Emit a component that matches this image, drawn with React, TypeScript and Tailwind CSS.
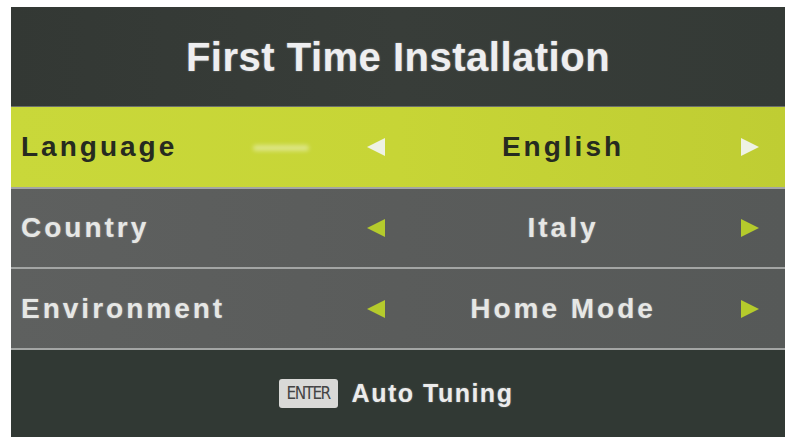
import React from 'react';

type Row = {
  label: string;
  value: string;
  active?: boolean;
};

const rows: Row[] = [
  { label: 'Language', value: 'English', active: true },
  { label: 'Country', value: 'Italy' },
  { label: 'Environment', value: 'Home Mode' },
];

function Arrow({ dir, color }: { dir: 'left' | 'right'; color: string }) {
  const points = dir === 'left' ? '0,8 16,0 16,16' : '0,0 16,8 0,16';
  return (
    <svg width="18" height="18" viewBox="0 0 16 16" className="shrink-0">
      <polygon points={points} fill={color} />
    </svg>
  );
}

function MenuRow({ row, heightClass }: { row: Row; heightClass: string }) {
  const text = row.active
    ? 'text-[#262b20]'
    : 'text-[#e6e7e5] [text-shadow:0_0_2px_rgba(255,255,255,0.35)]';
  const arrow = row.active ? '#eef2e4' : '#b5cb2c';
  return (
    <div
      className={`relative flex items-center pr-[26px] ${heightClass} ${
        row.active
          ? 'bg-gradient-to-r from-[#c9d83a] via-[#c7d536] to-[#bfcd33]'
          : 'bg-gradient-to-r from-[#5e605f] via-[#5a5c5b] to-[#565958]'
      }`}
    >
      <div className={`w-[356px] pl-[10px] text-[28px] font-bold tracking-[3px] ${text}`}>
        {row.label}
      </div>
      {row.active && (
        // faint reflection streak on the panel
        <div className="absolute left-[242px] top-[38px] h-[6px] w-[56px] rounded-full bg-white/40 blur-[2px]" />
      )}
      <Arrow dir="left" color={arrow} />
      <div className={`flex-1 text-center text-[28px] font-bold tracking-[3px] ${text}`}>
        {row.value}
      </div>
      <Arrow dir="right" color={arrow} />
    </div>
  );
}

export default function App() {
  return (
    <div
      className="w-[793px] h-[447px] bg-white pt-[7px] pl-[11px]"
      style={{ fontFamily: '"Liberation Sans", Arial, sans-serif' }}
    >
      <div className="flex h-[430px] w-[774px] flex-col bg-[#343a36]">
        {/* Title */}
        <div className="flex h-[100px] items-center justify-center bg-gradient-to-r from-[#333834] via-[#383d39] to-[#343a36] border-b border-[#6c706b]">
          <h1 className="text-[40px] font-bold tracking-[0.5px] text-[#eeeef0] [text-shadow:0_0_2px_rgba(255,255,255,0.4)]">
            First Time Installation
          </h1>
        </div>

        <MenuRow row={rows[0]} heightClass="h-[80px]" />
        <div className="h-[2px] bg-[#a3a5a4]" />
        <MenuRow row={rows[1]} heightClass="h-[78px]" />
        <div className="h-[2px] bg-[#a3a5a4]" />
        <MenuRow row={rows[2]} heightClass="h-[79px]" />
        <div className="h-[2px] bg-[#a3a5a4]" />

        {/* Footer hint */}
        <div className="flex flex-1 items-center justify-center gap-[14px] bg-[#313934] pr-[4px]">
          <div className="flex h-[29px] w-[59px] items-center justify-center rounded-[3px] bg-[#d9d9d7]">
            <span
              className="text-[17px] tracking-[-1.5px] text-[#444]"
              style={{ fontFamily: '"DejaVu Sans Condensed", "Liberation Sans", sans-serif' }}
            >
              ENTER
            </span>
          </div>
          <span className="text-[25px] font-bold tracking-[1.5px] text-[#ececec] [text-shadow:0_0_2px_rgba(255,255,255,0.35)]">
            Auto Tuning
          </span>
        </div>
      </div>
    </div>
  );
}
